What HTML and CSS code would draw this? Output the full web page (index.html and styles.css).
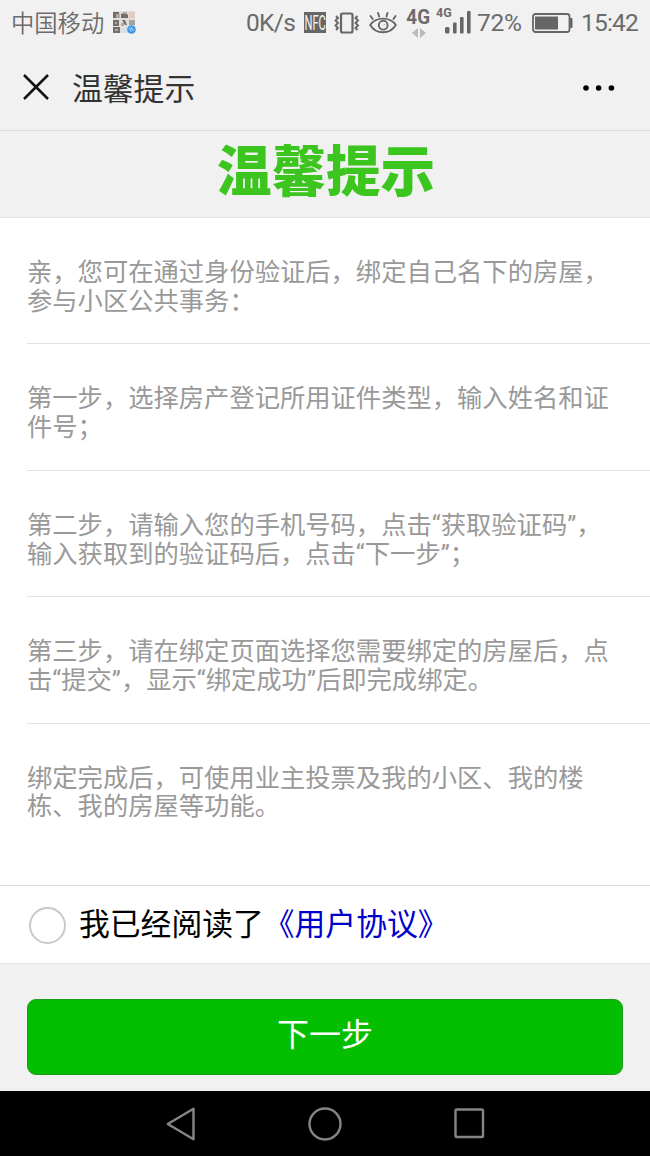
FILE: index.html
```html
<!DOCTYPE html>
<html lang="zh-CN">
<head>
    <meta charset="UTF-8">
    <meta name="viewport" content="width=device-width, initial-scale=1.0">
    <title>温馨提示</title>
    <link rel="stylesheet" href="styles.css">
</head>
<body>
    <div class="status-bar">
        <span class="carrier">中国移动</span>
        <svg class="app-icon" width="23" height="23" viewBox="0 0 23 23">
            <rect width="22" height="22" fill="#e2dedb"/>
            <path d="M0 1h6v3H3v3H0zM8 3l4-2 3 3v3H8zM0 9h6v6H0zM9 9h3l2 5h-2zM0 16h7v6H0z" fill="#736d6b"/>
            <path d="M3 3h4v4H3zM10 1h4v2h-4zM8 12h3v3H8zM2 11h2v2H2zM2 18h3v2H2z" fill="#b5a69d"/>
            <path d="M16 1h6v6h-6z" fill="#e8c9c1"/>
            <path d="M16 9h6v5h-6z" fill="#a5a3a3"/>
            <path d="M8 16h6v6H8z" fill="#d4e2ea"/>
            <circle cx="18.500" cy="18.500" r="4.300" fill="#3d96e6"/>
            <path d="M16 17l2.500 3.500M18 16l2.500 4" stroke="#a8d3f7" stroke-width="1.200"/>
        </svg>
        <span class="speed">0K/s</span>
        <div class="nfc"><span>NFC</span></div>
        <svg class="vibrate" width="26" height="22" viewBox="0 0 26 22" fill="none" stroke="#666">
            <rect x="7" y="1.500" width="11.500" height="19" rx="1.500" stroke-width="2.200"/>
            <path d="M2 4l2 2-2.500 2.500L4 11l-2.500 2.500L4 16l-2 2M23.500 4l-2 2 2.500 2.500-2.500 2.500 2.500 2.500-2.500 2.500 2 2" stroke-width="1.900"/>
        </svg>
        <svg class="eye" width="28" height="23" viewBox="0 0 28 23" fill="none" stroke="#666" stroke-width="1.900" stroke-linecap="round">
            <path d="M1.200 14C4 10 8.500 7.600 14 7.600S24 10 26.800 14c-2.800 4.800-7.300 7.300-12.800 7.300S4 18.800 1.200 14z"/>
            <circle cx="14.200" cy="14.200" r="4.400"/>
            <path d="M1.500 5l2.200 3M9 2l1.200 3.500M18.500 2l-1 3.500M26.500 5l-2 3"/>
            <circle cx="15.200" cy="13.500" r=".5" fill="#666" stroke="none"/>
        </svg>
        <div class="data">
            <b>4G</b>
            <svg width="14" height="10" viewBox="0 0 14 10"><path d="M6 0v10L0 5zM8 0v10l6-5z" fill="#bbb"/></svg>
        </div>
        <div class="signal">
            <b>4G</b>
            <svg width="27" height="23" viewBox="0 0 27 23" fill="#666">
                <rect x="0" y="16" width="4.500" height="6.500" rx="1.500"/>
                <rect x="8" y="11.500" width="3.600" height="11" rx="1"/>
                <rect x="15" y="6" width="3.600" height="16.500" rx="1"/>
                <rect x="22" y="0" width="3.600" height="22.500" rx="1"/>
            </svg>
        </div>
        <span class="percent">72%</span>
        <svg class="battery" width="41" height="20" viewBox="0 0 41 20">
            <rect x="1" y="1" width="36.500" height="18" rx="2.500" fill="none" stroke="#666" stroke-width="1.800"/>
            <rect x="3" y="3.500" width="23" height="13" fill="#666"/>
            <path d="M38 5h1.500q1 0 1 1v8q0 1-1 1H38z" fill="#666"/>
        </svg>
        <span class="time">15:42</span>
    </div>

    <div class="nav-bar">
        <svg class="close" width="26" height="26" viewBox="0 0 26 26" stroke="#111" stroke-width="2.500"><path d="M1 1l24 24M25 1L1 25"/></svg>
        <span class="nav-title">温馨提示</span>
        <svg class="more" width="32" height="6" viewBox="0 0 32 6" fill="#000">
            <circle cx="3" cy="3" r="2.800"/>
            <circle cx="15.600" cy="3" r="2.800"/>
            <circle cx="28.400" cy="3" r="2.800"/>
        </svg>
    </div>

    <h1>温馨提示</h1>

    <div class="steps">
        <p>亲，您可在通过身份验证后，绑定自己名下的房屋，参与小区公共事务：</p>
        <p>第一步，选择房产登记所用证件类型，输入姓名和证件号；</p>
        <p>第二步，请输入您的手机号码，点击“获取验证码”，输入获取到的验证码后，点击“下一步”；</p>
        <p>第三步，请在绑定页面选择您需要绑定的房屋后，点击“提交”，显示“绑定成功”后即完成绑定。</p>
        <p>绑定完成后，可使用业主投票及我的小区、我的楼栋、我的房屋等功能。</p>
    </div>

    <div class="agree">
        <span class="radio"></span>
        <span>我已经阅读了<a class="agree-link">《用户协议》</a></span>
    </div>

    <div class="footer">
        <button class="next-btn">下一步</button>
    </div>

    <div class="system-nav">
        <svg width="30" height="34" viewBox="0 0 30 34"><path d="M27.500 1.800v30.400L1.800 17z"/></svg>
        <svg width="34" height="34" viewBox="0 0 34 34"><circle cx="17" cy="17" r="15.500"/></svg>
        <svg width="31" height="31" viewBox="0 0 31 31"><rect x="1.500" y="1.500" width="27.500" height="27.500" rx="1"/></svg>
    </div>
</body>
</html>
```

FILE: styles.css
```css
body {
    font-family: Roboto, "Noto Sans CJK SC", sans-serif;
    margin: 0;
    background-color: #f1f1f1;
    overflow: hidden;
}
svg {
    display: block;
    flex: none;
}
.status-bar {
    display: flex;
    align-items: center;
    height: 45px;
    padding-left: 11px;
    color: #6b6b6b;
    font-size: 24.5px;
    line-height: 47px;
    white-space: nowrap;
}
.carrier {
    width: 102px;
    padding-top: 3px;
    font-size: 23.3px;
    font-weight: 350;
}
.speed {
    width: 58px;
    margin-left: 110px;
    letter-spacing: -0.7px;
}
.nfc {
    display: flex;
    justify-content: center;
    width: 22px;
    height: 21px;
    background-color: #666;
    color: #f1f1f1;
    font-size: 20px;
    line-height: 23px;
}
.nfc span {
    transform: scaleX(0.56);
}
.vibrate {
    margin-left: 8px;
}
.eye {
    margin-left: 9px;
}
.data {
    display: flex;
    flex-direction: column;
    align-items: center;
    width: 25px;
    height: 38px;
    margin-left: 9px;
    font-size: 21px;
    line-height: 27px;
}
.data b {
    transform: scaleX(0.9);
}
.data svg {
    margin-top: -3px;
}
.signal {
    display: flex;
    width: 41px;
    margin-left: 5px;
    font-size: 12.5px;
    line-height: 4px;
}
.signal b {
    width: 9px;
}
.percent {
    width: 54px;
    letter-spacing: -0.3px;
}
.battery {
    margin-left: 1px;
}
.time {
    margin-left: 8px;
    letter-spacing: -0.8px;
}
.nav-bar {
    display: flex;
    align-items: center;
    height: 85px;
    padding: 0 35px 0 23px;
    border-bottom: 1px solid #dcdcdc;
}
.close {
    margin-top: -2px;
}
.nav-title {
    margin-left: 23px;
    padding-top: 5px;
    color: #333;
    font-size: 30.8px;
    line-height: 80px;
}
.more {
    margin-left: auto;
}
h1 {
    height: 86px;
    margin: 0;
    padding-left: 2px;
    color: #3cc51f;
    font-size: 54.5px;
    font-weight: 900;
    line-height: 82px;
    text-align: center;
}
.steps {
    height: 668px;
    padding-left: 27px;
    background-color: #fff;
    border-top: 1px solid #e2e2e2;
    box-sizing: border-box;
}
.steps p {
    height: 126.4px;
    margin: 0;
    padding: 41px 27px 0 0;
    border-bottom: 1px solid #e2e2e2;
    box-sizing: border-box;
    color: #999;
    font-size: 25.3px;
    line-height: 28.8px;
}
.steps p:last-child {
    border-bottom: none;
}
.agree {
    display: flex;
    align-items: center;
    height: 79px;
    padding-left: 29px;
    background-color: #fff;
    border-top: 1px solid #d9d9d9;
    border-bottom: 1px solid #e5e5e5;
    box-sizing: border-box;
    color: #000;
    font-size: 30.8px;
    line-height: 77px;
}
.radio {
    width: 37px;
    height: 37px;
    margin: 2px 13px 0 0;
    border: 2px solid #c9c9c9;
    border-radius: 50%;
    box-sizing: border-box;
}
.agree-link {
    color: #0000cc;
}
.footer {
    height: 127px;
    padding: 35px 27px 0;
    box-sizing: border-box;
}
.next-btn {
    display: block;
    width: 100%;
    height: 76px;
    padding: 0 0 10px;
    background-color: #04be02;
    border: 1px solid #1d9c1a;
    border-radius: 9px;
    color: #fff;
    font-family: inherit;
    font-size: 32px;
}
.system-nav {
    display: flex;
    align-items: center;
    justify-content: center;
    gap: 112px;
    height: 65px;
    padding-left: 1px;
    background-color: #000;
}
.system-nav svg {
    fill: none;
    stroke: #858585;
    stroke-width: 2.4;
    stroke-linejoin: round;
}
```
